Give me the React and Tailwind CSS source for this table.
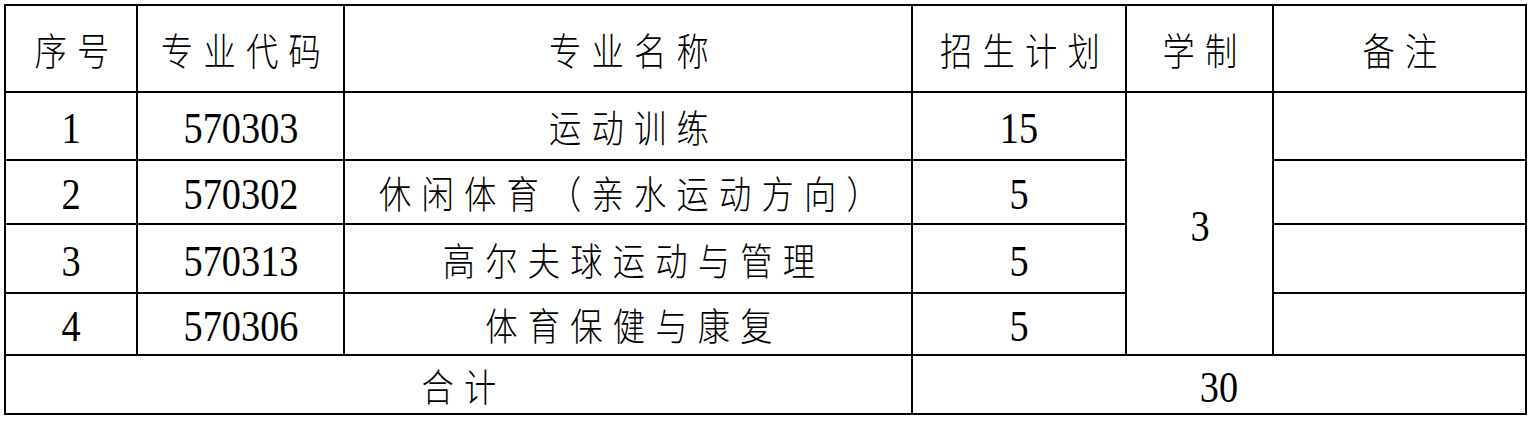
import React from "react";

const cjk =
  "inline-block whitespace-nowrap text-[38px] tracking-[12px] -mr-[12px] scale-x-[0.85] font-light leading-none font-['Noto_Sans_CJK_SC',sans-serif]";
const num =
  "inline-block whitespace-nowrap text-[44px] scale-x-[0.87] leading-none translate-y-[3px] font-['Liberation_Serif','DejaVu_Serif','Times_New_Roman',serif]";

function Cell({ children, className = "" }) {
  return (
    <div className={`bg-white flex items-center justify-center text-black min-w-0 ${className}`}>
      {children}
    </div>
  );
}

function T({ children }) {
  return <span className={cjk}>{children}</span>;
}
function N({ children }) {
  return <span className={num}>{children}</span>;
}

export default function App() {
  return (
    <div className="w-[1535px] h-[423px] bg-white pt-[4px] pl-[4px]">
      <div className="inline-grid bg-black p-[2px] gap-[2px] grid-cols-[130px_205px_566px_212px_145px_251px] grid-rows-[85px_66px_62px_67px_60px_57px]">
        <Cell><T>序号</T></Cell>
        <Cell><T>专业代码</T></Cell>
        <Cell><T>专业名称</T></Cell>
        <Cell><T>招生计划</T></Cell>
        <Cell><T>学制</T></Cell>
        <Cell><T>备注</T></Cell>

        <Cell className="col-start-1 row-start-2"><N>1</N></Cell>
        <Cell className="col-start-2 row-start-2"><N>570303</N></Cell>
        <Cell className="col-start-3 row-start-2"><T>运动训练</T></Cell>
        <Cell className="col-start-4 row-start-2"><N>15</N></Cell>
        <Cell className="col-start-5 row-start-2 row-span-4"><N>3</N></Cell>
        <Cell className="col-start-6 row-start-2" />

        <Cell className="col-start-1 row-start-3"><N>2</N></Cell>
        <Cell className="col-start-2 row-start-3"><N>570302</N></Cell>
        <Cell className="col-start-3 row-start-3"><T>休闲体育（亲水运动方向）</T></Cell>
        <Cell className="col-start-4 row-start-3"><N>5</N></Cell>
        <Cell className="col-start-6 row-start-3" />

        <Cell className="col-start-1 row-start-4"><N>3</N></Cell>
        <Cell className="col-start-2 row-start-4"><N>570313</N></Cell>
        <Cell className="col-start-3 row-start-4"><T>高尔夫球运动与管理</T></Cell>
        <Cell className="col-start-4 row-start-4"><N>5</N></Cell>
        <Cell className="col-start-6 row-start-4" />

        <Cell className="col-start-1 row-start-5"><N>4</N></Cell>
        <Cell className="col-start-2 row-start-5"><N>570306</N></Cell>
        <Cell className="col-start-3 row-start-5"><T>体育保健与康复</T></Cell>
        <Cell className="col-start-4 row-start-5"><N>5</N></Cell>
        <Cell className="col-start-6 row-start-5" />

        <Cell className="col-start-1 col-span-3 row-start-6"><T>合计</T></Cell>
        <Cell className="col-start-4 col-span-3 row-start-6"><N>30</N></Cell>
      </div>
    </div>
  );
}
